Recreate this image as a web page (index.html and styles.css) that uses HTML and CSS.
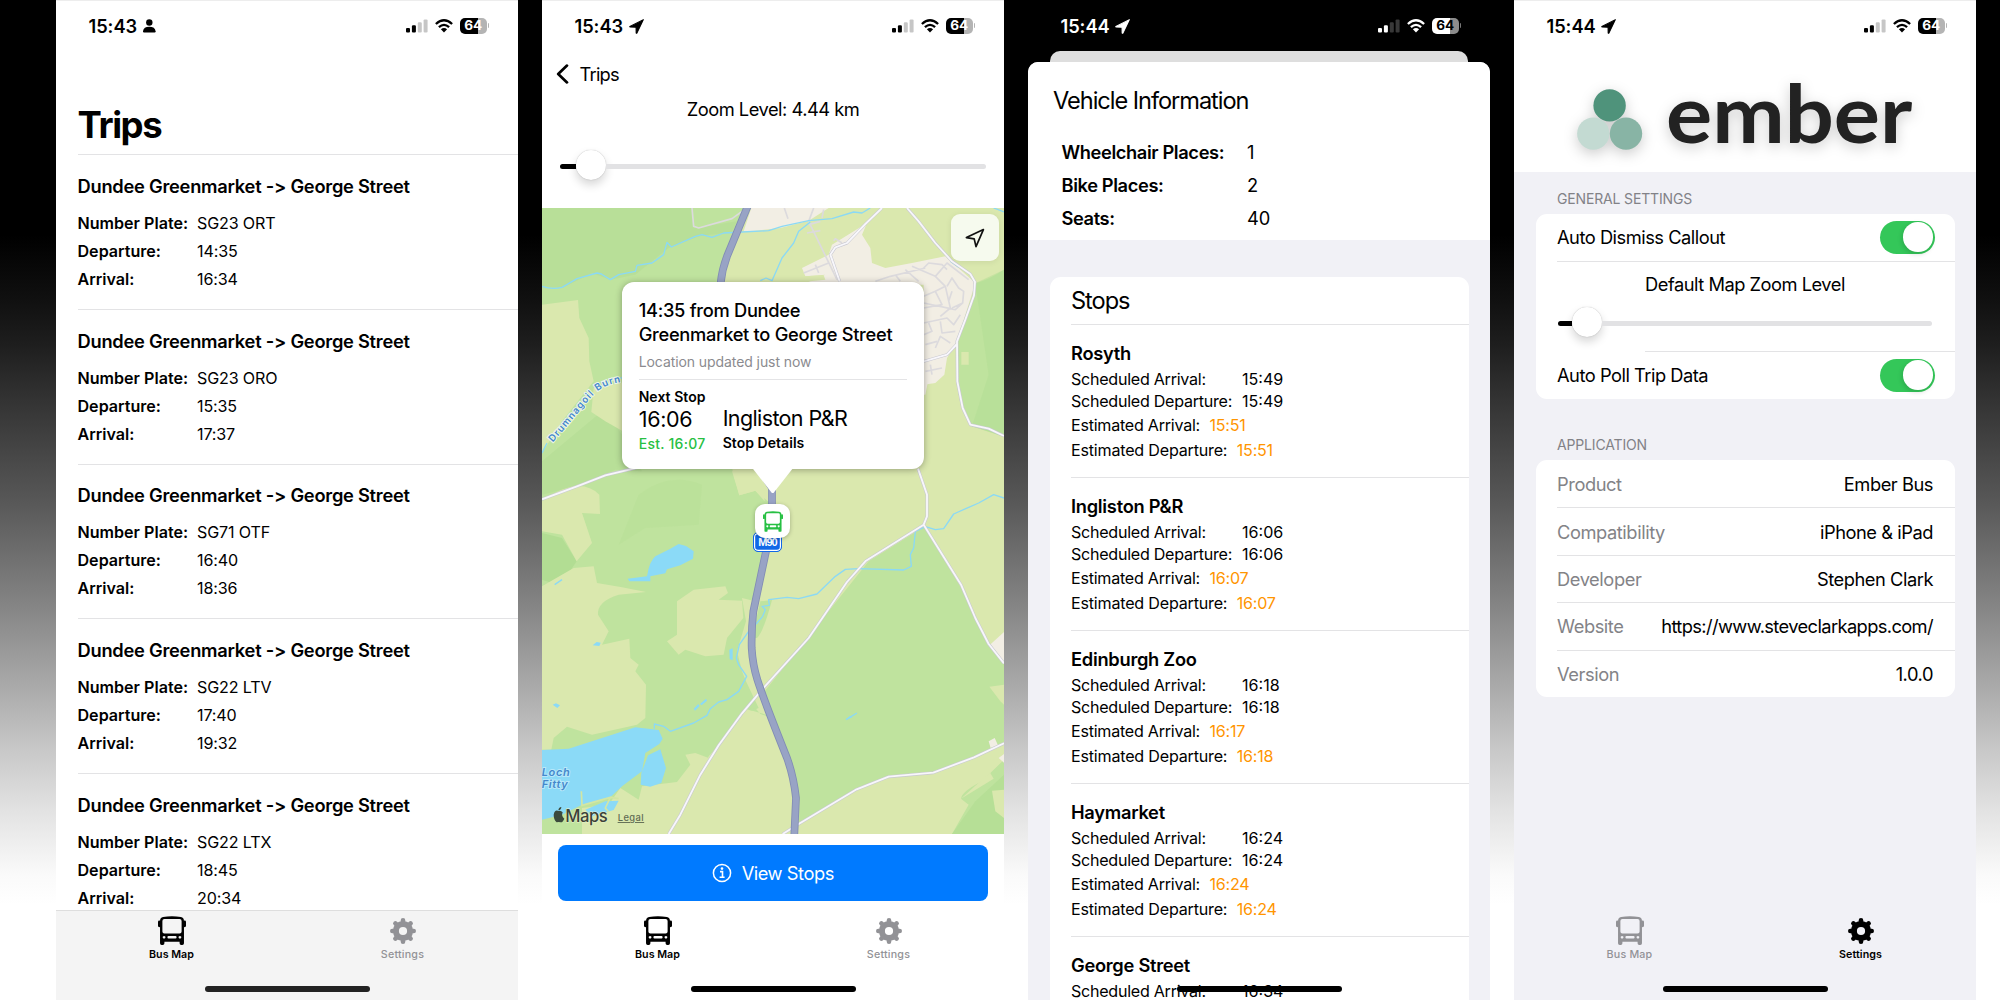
FILE: index.html
```
<!DOCTYPE html>
<html lang="en">
<head>
<meta charset="utf-8">
<title>Ember Bus</title>
<link rel="stylesheet" href="styles.css">
</head>
<body>
<svg class="sprite" aria-hidden="true">
  <symbol id="i-bus" viewBox="0 0 83 86">
    <path fill="currentColor" fill-rule="evenodd" d="M15 3Q41-2 68 3Q77 5 77 15V81Q77 86 72 86H69Q64 86 64 81V76H19V81Q19 86 14 86H11Q6 86 6 81V15Q6 5 15 3ZM19 9Q13 9 13 15V46Q13 52 19 52H64Q70 52 70 46V15Q70 9 64 9ZM18 59a4 4 0 1 0 .01 0ZM65 59a4 4 0 1 0 .01 0ZM31 59Q28 59 28 62V64Q28 67 31 67H52Q55 67 55 64V62Q55 59 52 59Z"/>
    <rect x="0" y="13" width="8" height="20" rx="4" fill="currentColor"/>
    <rect x="75" y="13" width="8" height="20" rx="4" fill="currentColor"/>
  </symbol>
  <symbol id="i-gear" viewBox="-13 -13 26 26">
    <circle r="7.1" fill="none" stroke="currentColor" stroke-width="6"/>
    <path stroke="currentColor" stroke-width="4.6" stroke-linecap="round" d="M0-9V-10.7M0 9V10.7M-9 0H-10.7M9 0H10.7M6.4-6.4L7.6-7.6M-6.4-6.4L-7.6-7.6M6.4 6.4L7.6 7.6M-6.4 6.4L-7.6 7.6"/>
  </symbol>
  <symbol id="i-arrow" viewBox="0 0 14 14">
    <path fill="currentColor" stroke="currentColor" stroke-width="1" stroke-linejoin="round" d="M13.4.6L.8 6.9Q.6 7.4 1 7.5L6.6 7.6 6.7 13Q7 13.5 7.4 13.1Z"/>
  </symbol>
  <symbol id="i-person" viewBox="0 0 13 14">
    <circle cx="6.3" cy="3.5" r="3.2" fill="currentColor"/>
    <path fill="currentColor" d="M0 12.2Q.6 7.8 6.3 7.8T12.6 12.2Q12.6 13.4 11.6 13.4H1Q0 13.4 0 12.2Z"/>
  </symbol>
  <symbol id="i-signal" viewBox="0 0 22 14">
    <g fill="currentColor"><rect x="0" y="9" width="4" height="4.6" rx="1.1"/><rect x="5.9" y="6.3" width="4" height="7.3" rx="1.1"/></g>
    <g fill="currentColor" opacity=".22"><rect x="11.8" y="3.3" width="4" height="10.3" rx="1.1"/><rect x="17.6" y=".4" width="4" height="13.2" rx="1.1"/></g>
  </symbol>
  <symbol id="i-wifi" viewBox="0 0 18 14">
    <g fill="none" stroke="currentColor" stroke-width="2.3"><path d="M.9 5Q9-2.4 17.1 5"/><path d="M3.9 8.2Q9 3.6 14.1 8.2"/></g>
    <path fill="currentColor" d="M9 13.6L5.9 10.3Q9 7.8 12.1 10.3Z"/>
  </symbol>
</svg>

<main class="board">

  <section class="phone">
    <div class="status">
      <span class="clock">15:43</span><svg class="s-mark" width="13" height="14"><use href="#i-person"/></svg>
      <svg class="s-signal"><use href="#i-signal"/></svg><svg class="s-wifi"><use href="#i-wifi"/></svg><span class="battery"><b>64</b></span>
    </div>
    <h1 class="big-title">Trips</h1>
    <div class="trips">
      <article class="trip"><h2>Dundee Greenmarket -&gt; George Street</h2><dl><dt>Number Plate:</dt><dd>SG23 ORT</dd><dt>Departure:</dt><dd>14:35</dd><dt>Arrival:</dt><dd>16:34</dd></dl></article>
      <article class="trip"><h2>Dundee Greenmarket -&gt; George Street</h2><dl><dt>Number Plate:</dt><dd>SG23 ORO</dd><dt>Departure:</dt><dd>15:35</dd><dt>Arrival:</dt><dd>17:37</dd></dl></article>
      <article class="trip"><h2>Dundee Greenmarket -&gt; George Street</h2><dl><dt>Number Plate:</dt><dd>SG71 OTF</dd><dt>Departure:</dt><dd>16:40</dd><dt>Arrival:</dt><dd>18:36</dd></dl></article>
      <article class="trip"><h2>Dundee Greenmarket -&gt; George Street</h2><dl><dt>Number Plate:</dt><dd>SG22 LTV</dd><dt>Departure:</dt><dd>17:40</dd><dt>Arrival:</dt><dd>19:32</dd></dl></article>
      <article class="trip"><h2>Dundee Greenmarket -&gt; George Street</h2><dl><dt>Number Plate:</dt><dd>SG22 LTX</dd><dt>Departure:</dt><dd>18:45</dd><dt>Arrival:</dt><dd>20:34</dd></dl></article>
    </div>
    <nav class="tabs tabs-bar">
      <a class="tab on"><svg class="bus"><use href="#i-bus"/></svg>Bus Map</a>
      <a class="tab"><svg class="gear"><use href="#i-gear"/></svg>Settings</a>
    </nav>
    <i class="home soft"></i>
  </section>

  <section class="phone">
    <div class="status">
      <span class="clock">15:43</span><svg class="s-mark" width="15" height="15"><use href="#i-arrow"/></svg>
      <svg class="s-signal"><use href="#i-signal"/></svg><svg class="s-wifi"><use href="#i-wifi"/></svg><span class="battery"><b>64</b></span>
    </div>
    <div class="back"><svg width="13" height="20" viewBox="0 0 13 20"><path d="M11 1.6L2.2 10L11 18.4" fill="none" stroke="#000" stroke-width="2.7" stroke-linecap="round" stroke-linejoin="round"/></svg><span>Trips</span></div>
    <p class="zoom-label">Zoom Level: 4.44 km</p>
    <div class="slider slider-map"><i class="fill"></i><i class="thumb"></i><i class="rest"></i></div>
    <div class="map">
      <svg class="terrain" viewBox="0 0 1386 1878">
        <defs>
          <path id="burn" d="M32 704C105 622 122 592 164 552C195 528 216 526 262 518"/>
          <path id="lanes" d="M0 874L105 835L190 802L290 778M1095 0L1130 40L1180 105L1230 160L1285 198L1299 222L1296 262L1270 335L1245 400L1246 520L1262 600L1285 650L1340 662L1386 684M893 220L865 140L880 118L915 105L970 48L1020 0M1145 460L1215 440L1245 408M1128 782L1155 860V925L1145 950M1145 950L972 1058L915 1122L800 1290L660 1445L600 1516L530 1612L475 1700L415 1820L380 1878M1145 950L1258 1132L1300 1230L1340 1308L1386 1366M722 1878L770 1848L944 1744L1040 1706L1174 1694L1296 1648L1386 1606"/>
          <path id="motorway" d="M617-5L555 145Q540 185 536 225L600 700L690 840V900L672 1030L634 1210Q628 1260 629 1320Q632 1370 646 1415Q665 1475 735 1650Q755 1705 762 1770L757 1880"/>
        </defs>
        <rect width="1386" height="1878" fill="#dae8ae"/>
        <!-- woodland and fields -->
        <g fill="#bfe39e">
          <path d="M0 0H620L548 150L530 225L560 700L572 790L592 862L640 848L690 890L640 1180L600 1170L612 1240L585 1330L600 1390L612 1420L650 1500L600 1520L500 1650L460 1635L430 1640L445 1670L405 1722L300 1735L290 1775L235 1740L200 1790L120 1800V1878H0Z"/>
          <path d="M1146 956L1258 1140L1340 1310L1386 1368V1602L1296 1650L1174 1694L1040 1708L944 1744L770 1850L772 1770L755 1700L668 1450L980 1060Z"/>
          <path d="M1300 226Q1340 215 1386 185V686L1290 655L1250 560L1245 400L1285 300Z"/>
          <path d="M1386 1655L1320 1720Q1260 1750 1257 1772L1280 1790L1230 1878H1386Z"/>
          <path d="M645 1290Q665 1270 690 1176L655 1180L630 1290Z"/>
          <path d="M615 1504L672 1520L690 1560L640 1500Z"/>
        </g>
        <g fill="#b2dd93">
          <path d="M0 0H452L455 60L585 40L570 72L470 85L380 120L280 200L205 215L150 195L60 240L0 235Z" opacity=".55"/>
          <path d="M0 975L60 990L104 1060L60 1125L30 1125L0 1115Z"/>
          <path d="M180 610Q240 660 300 790L220 785L120 830L0 860V760Z" opacity=".55"/>
          <path d="M290 860Q380 790 480 830L470 950L310 960L230 1010Z" opacity=".3"/>
          <path d="M1300 226L1386 185V686L1290 655L1340 500Z" opacity=".5"/>
          <path d="M1300 1780L1386 1700V1878H1230Z" opacity=".7"/>
        </g>
        <g fill="#dae8ae">
          <path d="M0 290L108 276L112 330L140 390L142 460L155 520L60 640L0 735Z"/>
          <path d="M155 540L240 525V668L190 640L148 612Z"/>
          <path d="M0 880Q110 800 172 860L174 918L120 915L150 1005L104 1060L60 980L0 970Z"/>
          <path d="M0 1135L95 1080L155 1075L165 1125L240 1138L312 1152L230 1160Q165 1180 168 1220L200 1270L180 1310L262 1292L265 1350L290 1370L280 1390L312 1430L310 1530L285 1550L150 1580L75 1556L35 1590L28 1625H0Z"/>
          <path d="M405 1180L455 1145L550 1135L558 1155L530 1175L600 1178L604 1230L555 1290L545 1340L490 1345L430 1325L410 1340L375 1300L405 1280Z"/>
          <path d="M600 1520L615 1504L690 1530L750 1700L748 1878H380L440 1790L500 1645L540 1600Z"/>
          <path d="M1386 1430L1342 1436L1375 1480L1386 1490ZM1258 432h22v38h-22Z"/>
          <path d="M1320 1652L1355 1712L1257 1772L1386 1655Z"/>
          <path d="M1386 1745L1350 1748L1360 1810L1386 1830Z"/>
          <path d="M570 790L592 862L640 848L668 880L662 790Z"/>
        </g>
        <!-- built-up area -->
        <g fill="#f2eee4">
          <path d="M605 70L628 0H860L800 38L715 60L640 68Z"/>
          <path d="M975 45L960 80L985 120L990 165L1030 180L1110 165L1210 145L1300 225L1245 400L1215 450L1207 500L1180 525L1145 530V230H780L850 200L790 205L780 180L860 140L870 110Z"/>
          <path d="M1145 520L1157 525L1150 560L1145 560Z"/>
          <path d="M1386 1272L1344 1310L1386 1366ZM1340 1600l18-10 10 22-22 8ZM1370 1650l16-12v26Z"/>
        </g>
        <path fill="#dae8ae" d="M790 205L845 202L850 215L780 222Z"/>
        <!-- residential streets -->
        <g fill="none" stroke="#dcdadd" stroke-width="5" stroke-linejoin="round">
          <path d="M727 0L738 32M815 0L800 40M800 40L885 215M795 75L835 68M800 50L835 40M840 30L845 5M875 98L880 92L900 105M785 195L860 165M820 170L830 195"/>
          <path d="M1000 220L1045 205L1150 180M1060 200L1075 220M1090 185L1130 220M1110 175L1180 205L1210 235M1145 180L1160 165L1200 170L1215 185M1180 205L1215 165L1280 215M1215 235L1230 210L1250 240L1265 250L1262 285L1230 300M1145 265L1180 250L1200 290L1145 300M1180 250L1210 235L1225 300L1195 325M1230 250L1220 280M1145 285L1240 305L1262 285"/>
          <path d="M1145 345L1215 330L1235 350L1255 320M1160 345L1170 370L1145 380M1195 340L1200 375L1240 370M1180 420L1195 385L1225 405M1150 410L1185 400M1150 490L1200 480M1165 470L1170 500M450 0L455 55L470 60L570 32L600 10"/>
        </g>
        <!-- lochs, ponds and streams -->
        <g fill="none" stroke="#8bd9f5" stroke-width="4" stroke-linejoin="round">
          <path d="M0 235Q30 245 60 238L105 212L165 195L178 198L205 215L230 200L280 190L285 172L330 165L365 140L375 103L388 117L460 85L480 80L510 88L545 75L600 72L680 68L720 55L800 38L870 32L935 12L960 15L985 0"/>
          <path d="M655 218L672 210L690 218L720 150L755 105L770 70L805 42M1386 12L1355 0M1225 160L1250 178"/>
          <path d="M0 735L15 705M228 512L245 508"/>
          <path d="M1386 870L1355 860L1310 885L1280 898L1235 918L1205 962L1180 965L1150 956L1120 970L1115 1020L1105 1040L1108 1075L1085 1086L950 1082L910 1084L880 1105L825 1158L770 1172L735 1168L680 1175L682 1192L660 1195L670 1205L662 1225L645 1245L620 1270L592 1310L583 1350L590 1370L614 1405L590 1450L555 1475L530 1482L505 1502L495 1522L455 1545L385 1570L365 1555L337 1548V1562"/>
          <path d="M38 1130L60 1115M912 1535L945 1515"/>
        </g>
        <g fill="#8bdaf7">
          <path d="M0 1626L80 1622L180 1590L280 1558L350 1566L362 1592L352 1608L310 1635L300 1690L240 1735L205 1768L120 1790L60 1820L0 1835Z"/>
          <path d="M318 1642L355 1624L372 1680L358 1725L325 1736L296 1730L298 1695Z"/>
          <path d="M130 1805L190 1780L230 1778L215 1806L195 1812L150 1825Z"/>
          <path d="M257 1112L315 1105Q322 1060 340 1045L385 1022L410 1008L432 1014L455 1030L453 1052L415 1072L375 1084L370 1096L325 1105L325 1120L262 1120Z"/>
          <path d="M152 1312l12-10 12 2-4 10ZM32 1490l10-4 12 6-8 8ZM562 1325l10-4v36l-9-4ZM455 1502l14-14 4 6-14 14ZM474 1488l18-16 3 6-16 14ZM912 1535l10-10 10 2Z"/>
        </g>
        <path fill="none" stroke="#d2e6a4" stroke-width="5" d="M118 1750L120 1792L205 1768L190 1800L200 1812M205 1768L230 1772"/>
        <!-- roads -->
        <g fill="none" stroke-linejoin="round">
          <use href="#lanes" stroke="#c9c9d2" stroke-width="9"/>
          <use href="#lanes" stroke="#f8f7fb" stroke-width="5.5"/>
          <use href="#motorway" stroke="#818cb4" stroke-width="23"/>
          <use href="#motorway" stroke="#98a3c5" stroke-width="18"/>
        </g>
        <!-- place names -->
        <text class="water-name burn-name"><textPath href="#burn">Drumnagoil Burn</textPath></text>
        <text class="water-name loch" x="-1" y="1705">Loch</text>
        <text class="water-name loch" x="-1" y="1740">Fitty</text>
        <path fill="#3b4a3c" d="M62 1813Q56 1806 50 1809Q38 1804 35 1820Q35 1836 44 1843Q50 1841 56 1843Q62 1844 67 1832Q57 1824 62 1813ZM49 1807Q50 1798 58 1797Q58 1806 49 1807Z"/>
        <text class="maps-mark" x="70" y="1843">Maps</text>
        <text class="legal" x="227" y="1839">Legal</text>
      </svg>
      <span class="shield">M90</span>
      <span class="pin"><svg><use href="#i-bus"/></svg></span>
      <span class="locate"><svg width="20" height="20" viewBox="0 0 20 20"><path d="M18.4 1.6L1.4 9.6L9.2 10.9L11 18.6Z" fill="none" stroke="#111" stroke-width="1.7" stroke-linejoin="round"/></svg></span>
      <div class="callout">
        <h3>14:35 from Dundee Greenmarket to George Street</h3>
        <p class="updated">Location updated just now</p>
        <div class="next">
          <div class="col"><b>Next Stop</b><span class="time">16:06</span><em>Est. 16:07</em></div>
          <div class="col col-stop"><span class="place">Ingliston P&amp;R</span><b>Stop Details</b></div>
        </div>
      </div>
    </div>
    <div class="action"><button class="cta"><svg width="20" height="20" viewBox="0 0 20 20"><circle cx="10" cy="10" r="8.6" fill="none" stroke="#fff" stroke-width="1.5"/><path d="M8 8.6H10.5V14M7.6 14.2H12.6" fill="none" stroke="#fff" stroke-width="1.6"/><circle cx="10" cy="5.6" r="1.3" fill="#fff"/></svg><span>View Stops</span></button></div>
    <nav class="tabs">
      <a class="tab on"><svg class="bus"><use href="#i-bus"/></svg>Bus Map</a>
      <a class="tab"><svg class="gear"><use href="#i-gear"/></svg>Settings</a>
    </nav>
    <i class="home"></i>
  </section>

  <section class="phone dark">
    <div class="status">
      <span class="clock">15:44</span><svg class="s-mark" width="15" height="15"><use href="#i-arrow"/></svg>
      <svg class="s-signal"><use href="#i-signal"/></svg><svg class="s-wifi"><use href="#i-wifi"/></svg><span class="battery"><b>64</b></span>
    </div>
    <div class="behind"></div>
    <div class="sheet">
      <div class="vehicle">
        <h2 class="sheet-title">Vehicle Information</h2>
        <dl><dt>Wheelchair Places:</dt><dd>1</dd><dt>Bike Places:</dt><dd>2</dd><dt>Seats:</dt><dd>40</dd></dl>
      </div>
      <div class="stops">
        <h2 class="sheet-title">Stops</h2>
        <article class="stop"><h3>Rosyth</h3><p>Scheduled Arrival:<span>15:49</span></p><p>Scheduled Departure:<span>15:49</span></p><p class="est est-a">Estimated Arrival:<span>15:51</span></p><p class="est">Estimated Departure:<span>15:51</span></p></article>
        <article class="stop"><h3>Ingliston P&amp;R</h3><p>Scheduled Arrival:<span>16:06</span></p><p>Scheduled Departure:<span>16:06</span></p><p class="est est-a">Estimated Arrival:<span>16:07</span></p><p class="est">Estimated Departure:<span>16:07</span></p></article>
        <article class="stop"><h3>Edinburgh Zoo</h3><p>Scheduled Arrival:<span>16:18</span></p><p>Scheduled Departure:<span>16:18</span></p><p class="est est-a">Estimated Arrival:<span>16:17</span></p><p class="est">Estimated Departure:<span>16:18</span></p></article>
        <article class="stop"><h3>Haymarket</h3><p>Scheduled Arrival:<span>16:24</span></p><p>Scheduled Departure:<span>16:24</span></p><p class="est est-a">Estimated Arrival:<span>16:24</span></p><p class="est">Estimated Departure:<span>16:24</span></p></article>
        <article class="stop last"><h3>George Street</h3><p>Scheduled Arrival:<span>16:34</span></p></article>
      </div>
    </div>
    <i class="home"></i>
  </section>

  <section class="phone grouped">
    <div class="brand">
      <div class="status">
        <span class="clock">15:44</span><svg class="s-mark" width="15" height="15"><use href="#i-arrow"/></svg>
        <svg class="s-signal"><use href="#i-signal"/></svg><svg class="s-wifi"><use href="#i-wifi"/></svg><span class="battery"><b>64</b></span>
      </div>
      <div class="logo">
        <svg width="66" height="62" viewBox="0 0 66 62"><circle cx="32.6" cy="16.4" r="16.2" fill="#4f937b"/><circle cx="16.3" cy="44.6" r="16.2" fill="#c3dad2"/><circle cx="49" cy="44.6" r="16.2" fill="#88b4a5"/></svg>
        <span class="wordmark">ember</span>
      </div>
    </div>
    <h4 class="group-name">GENERAL SETTINGS</h4>
    <div class="card">
      <div class="row"><span>Auto Dismiss Callout</span><i class="toggle"></i></div>
      <div class="row zoom-row"><p>Default Map Zoom Level</p><div class="slider"><i class="fill"></i><i class="thumb"></i><i class="rest"></i></div></div>
      <div class="row short-line"><span>Auto Poll Trip Data</span><i class="toggle"></i></div>
    </div>
    <h4 class="group-name second">APPLICATION</h4>
    <div class="card about">
      <div class="row"><label>Product</label><span>Ember Bus</span></div>
      <div class="row"><label>Compatibility</label><span>iPhone &amp; iPad</span></div>
      <div class="row"><label>Developer</label><span>Stephen Clark</span></div>
      <div class="row"><label>Website</label><span class="url">https://www.steveclarkapps.com/</span></div>
      <div class="row"><label>Version</label><span>1.0.0</span></div>
    </div>
    <nav class="tabs">
      <a class="tab"><svg class="bus"><use href="#i-bus"/></svg>Bus Map</a>
      <a class="tab on wide"><svg class="gear"><use href="#i-gear"/></svg>Settings</a>
    </nav>
    <i class="home"></i>
  </section>

</main>
</body>
</html>
```
FILE: styles.css
```
* { box-sizing: border-box; margin: 0; padding: 0; }
body { font-family: Inter, "Liberation Sans", sans-serif; color: #000; width: 2000px; height: 1000px; overflow: hidden; }
h1, h2, h3, h4 { font-weight: 600; }
svg { display: block; flex: none; }
.sprite { position: absolute; width: 0; height: 0; }

.board {
  display: grid; grid-template-columns: repeat(4, 462px); column-gap: 24px;
  width: 2000px; height: 1000px; padding-left: 56px;
  background: linear-gradient(#000 0, #000 235px, #101010 300px, #1e1e1e 345px, #333 400px, #575757 500px, #828282 600px, #b0b0b0 700px, #c8c8c8 750px, #e2e2e2 810px, #fafafa 875px, #fff 905px);
}
.phone { position: relative; display: flex; flex-direction: column; height: 1000px; overflow: hidden; background: #fff; box-shadow: inset 0 1px #ededed; }
.dark { background: #000; box-shadow: none; }
.grouped { background: #f1f1f6; }

/* status bar */
.status { display: flex; align-items: center; flex: none; height: 52px; padding: 0 28px 0 32.5px; }
.clock { width: 54.5px; font-weight: 600; font-size: 18.27px; letter-spacing: -.05px; }
.s-mark { margin-right: auto; }
.s-signal { width: 22px; height: 14px; }
.s-wifi { width: 18px; height: 14px; margin-left: 7px; }
.battery { position: relative; width: 27.5px; height: 15.5px; margin: 0 3px 0 7px; border-radius: 5px; background: linear-gradient(90deg, #000 65%, #b4b4b4 65%); color: #fff; text-align: center; }
.battery b { display: block; font-size: 13.6px; line-height: 15.5px; font-weight: 700; }
.battery::after { content: ""; position: absolute; left: 28.2px; top: 5.2px; width: 1.8px; height: 5px; border-radius: 0 2px 2px 0; background: #b4b4b4; }
.dark .status { height: 51px; padding-top: 1px; color: #fff; }
.dark .battery { background: linear-gradient(90deg, #fff 65%, #8c8c8c 65%); color: #000; }
.dark .battery::after { background: #777; }

.home { position: absolute; left: 149px; bottom: 8.5px; width: 165px; height: 5.5px; border-radius: 3px; background: #000; }
.home.soft { background: #222; }

/* tab bar */
.tabs { display: grid; grid-template-columns: 1fr 1fr; flex: none; height: 90px; margin-top: auto; }
.tabs-bar { background: #f4f4f4; box-shadow: inset 0 1px #dedede; }
.tab { display: flex; flex-direction: column; align-items: center; padding-top: 6px; font-size: 10.7px; line-height: 14px; font-weight: 500; letter-spacing: .2px; color: #929296; }
.tab.on { color: #000; font-weight: 600; letter-spacing: 0; }
.tab.wide { letter-spacing: .1px; }
.bus { width: 28px; height: 29px; margin-bottom: 3px; }
.gear { width: 26px; height: 26px; margin: 1.5px 0 4.5px; }

/* trips list */
.big-title { flex: none; height: 102px; padding: 50.8px 0 0 21.5px; font-size: 36.5px; line-height: 44px; font-weight: 700; letter-spacing: -1.4px; }
.trips { flex: 1; min-height: 0; overflow: hidden; }
.trip { height: 154.8px; margin-left: 21.5px; padding-top: 18.8px; border-top: 1px solid #e3e3e5; }
.trip h2 { font-size: 18.27px; line-height: 24px; letter-spacing: -.24px; }
.trip dl { display: grid; grid-template-columns: 119.5px 1fr; margin-top: 11px; font-size: 16.1px; line-height: 28px; }
.trip dt { font-weight: 600; }
.trip dd { letter-spacing: -.15px; }

/* map screen */
.back { display: flex; align-items: center; gap: 10.5px; flex: none; height: 44px; padding-left: 14px; font-size: 18.27px; letter-spacing: -.75px; }
.zoom-label { flex: none; height: 26px; text-align: center; font-size: 18.27px; line-height: 26px; letter-spacing: -.48px; }
.slider { display: flex; align-items: center; height: 30px; }
.slider .fill { width: 16px; height: 5px; border-radius: 3px 0 0 3px; background: #000; }
.slider .thumb { width: 30px; height: 30px; margin-top: -3px; border-radius: 50%; background: #fff; box-shadow: 0 0 1px rgba(0,0,0,.3), 0 5px 10px rgba(0,0,0,.16); }
.slider .rest { flex: 1; height: 5px; border-radius: 0 3px 3px 0; background: #e2e2e4; }
.slider-map { flex: none; margin: 29px 18px 27px; }
.map { position: relative; flex: none; height: 626px; overflow: hidden; }
.terrain { width: 462px; height: 626px; }
.water-name { fill: #4488cc; stroke: #eef6ea; stroke-width: 6px; paint-order: stroke; }
.burn-name { font-size: 29px; letter-spacing: 3.2px; font-weight: 600; }
.loch { font-size: 33px; letter-spacing: 2px; font-weight: 600; font-style: italic; stroke: #b8e8fa; }
.maps-mark { font-size: 50px; letter-spacing: -1.6px; fill: #3b4239; stroke: #e9f2cb; stroke-width: 3px; paint-order: stroke; font-weight: 500; }
.legal { font-size: 28px; fill: #5f6b53; text-decoration: underline; font-weight: 500; letter-spacing: 1.4px; }
.shield { position: absolute; left: 211px; top: 324px; width: 29px; height: 20px; border-radius: 5px; background: #1168e8; border: 1px solid #1168e8; box-shadow: inset 0 0 0 1.2px #fff; color: #fff; font: 700 11px/19px "Liberation Sans", sans-serif; letter-spacing: -.9px; text-align: center; }
.pin { position: absolute; left: 213px; top: 296px; display: grid; place-items: center; width: 35px; height: 34px; border-radius: 10px; background: #fff; color: #27c043; box-shadow: 0 1px 4px rgba(0,0,0,.25); }
.pin svg { width: 20px; height: 21px; }
.locate { position: absolute; left: 409px; top: 6px; display: grid; place-items: center; width: 48px; height: 47px; border-radius: 9px; background: rgba(248,251,243,.93); box-shadow: 0 1px 6px rgba(0,0,0,.08); }
.callout { position: absolute; left: 79.7px; top: 74px; width: 302.3px; height: 187px; padding: 17px 17px 0; border-radius: 12px; background: #fff; box-shadow: 0 1px 7px rgba(0,0,0,.32); }
.callout::after { content: ""; position: absolute; left: 131px; top: 186.5px; width: 40px; height: 25.5px; background: #fff; clip-path: polygon(0 0, 100% 0, 52% 96%, 48% 96%); }
.callout h3 { font-size: 18.27px; line-height: 23.6px; font-weight: 500; letter-spacing: -.29px; }
.updated { margin-top: 6.7px; font-size: 14px; line-height: 18px; letter-spacing: -.08px; color: #8b8b8f; }
.next { display: flex; align-items: flex-end; margin-top: 8px; padding-top: 8px; border-top: 1px solid #e4e4e6; }
.col { display: flex; flex-direction: column; width: 84px; font-size: 14px; line-height: 18px; white-space: nowrap; }
.col b { font-weight: 600; letter-spacing: .04px; }
.col em { margin-top: 2.7px; font-style: normal; font-weight: 500; letter-spacing: .25px; color: #27c043; }
.time, .place { font-size: 21.5px; line-height: 26px; letter-spacing: -.3px; }
.place { letter-spacing: -.62px; }
.col-stop { padding-bottom: 1px; }
.col-stop b { margin-top: 2.7px; }
.action { flex: none; padding: 11.4px 16px 0; }
.cta { display: flex; align-items: center; justify-content: center; gap: 9.5px; width: 100%; height: 56px; border: 0; border-radius: 8px; background: #007aff; color: #fff; font-family: inherit; font-size: 18.27px; letter-spacing: -.45px; }

/* vehicle sheet */
.behind { flex: none; height: 10.5px; margin: 0 22px; border-radius: 10px 10px 0 0; background: #dedede; }
.sheet { flex: 1; min-height: 0; overflow: hidden; border-radius: 10px 10px 0 0; background: #f1f1f6; }
.sheet-title { font-size: 23.6px; line-height: 30px; font-weight: 400; letter-spacing: -1.04px; }
.vehicle { height: 178.5px; padding: 24.8px 0 0 25px; background: #fff; }
.vehicle dl { display: grid; grid-template-columns: 185.5px 1fr; margin: 19.4px 0 0 8.5px; font-size: 18.27px; line-height: 32.9px; }
.vehicle dt { font-weight: 600; letter-spacing: -.38px; }
.stops { margin: 37.2px 21.5px 0 22px; border-radius: 11px 11px 0 0; background: #fff; }
.stops .sheet-title { padding: 9.3px 0 7.7px 21px; }
.stop { height: 153.05px; margin-left: 21px; padding-top: 15.5px; border-top: 1px solid #e3e3e5; font-size: 16.1px; line-height: 22px; letter-spacing: -.27px; }
.stop.last { height: auto; }
.stop h3 { margin-bottom: 3.4px; font-size: 18.27px; line-height: 24px; }
.stop p { display: grid; grid-template-columns: 171px 1fr; }
.stop span { letter-spacing: 0; }
.stop .est { display: flex; gap: 9.5px; line-height: 25px; letter-spacing: -.2px; }
.stop .est-a { margin-top: 1.2px; letter-spacing: -.25px; }
.est span { color: #ff9500; letter-spacing: -.25px; }

/* settings */
.brand { flex: none; height: 172px; background: #fff; box-shadow: inset 0 1px #ededed; }
.logo { display: flex; align-items: center; padding: 37px 0 0 63.3px; filter: drop-shadow(0 4px 7px rgba(0,0,0,.2)); }
.wordmark { margin: -17px 0 0 23px; font-family: Lato, "Liberation Sans", sans-serif; font-size: 81px; line-height: 72px; font-weight: 700; color: #222; transform: scaleX(1.068); transform-origin: left; }
.group-name { flex: none; height: 41.5px; padding: 17.5px 0 0 43px; font-size: 14px; line-height: 18px; font-weight: 400; letter-spacing: -.16px; color: #828287; }
.group-name.second { height: 61px; padding-top: 37px; }
.card { flex: none; margin: 0 21.5px; border-radius: 11px; background: #fff; font-size: 18.27px; letter-spacing: -.48px; }
.row { position: relative; display: flex; align-items: center; justify-content: space-between; height: 47px; padding: 0 21.5px; }
.row + .row::before { content: ""; position: absolute; left: 21.5px; right: 0; top: 0; height: 1px; background: #e3e3e5; }
.row.short-line::before { left: 109.5px; }
.row.short-line { height: 48px; }
.zoom-row { display: block; height: 90.5px; padding: 11.5px 22.5px 0; }
.zoom-row p { text-align: center; line-height: 24px; }
.zoom-row .slider { margin-top: 12.5px; }
.zoom-row .fill { width: 14px; }
.toggle { display: flex; justify-content: flex-end; align-items: center; width: 55px; height: 33px; margin-right: -1.5px; padding-right: 2px; border-radius: 17px; background: #34c759; }
.toggle::after { content: ""; width: 29.5px; height: 29.5px; border-radius: 50%; background: #fff; box-shadow: -1px 2px 5px rgba(0,0,0,.15); }
.about .row { height: 47.4px; padding-top: 1px; letter-spacing: -.45px; }
.about label { color: #838387; letter-spacing: -.42px; }
.about .url { letter-spacing: -.6px; }
```
